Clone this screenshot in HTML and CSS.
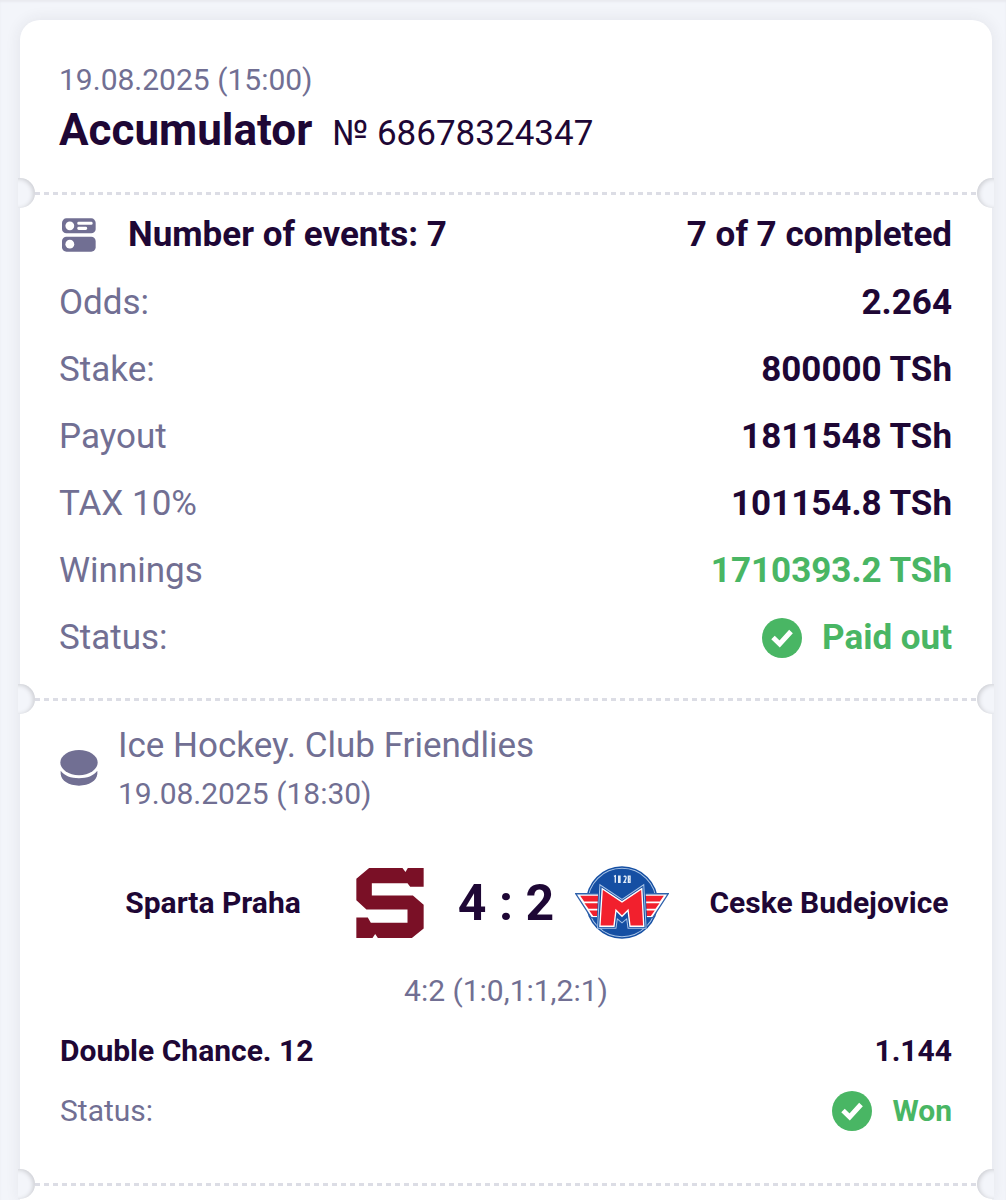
FILE: index.html
```html
<!DOCTYPE html>
<html lang="en">
<head>
<meta charset="utf-8">
<meta name="viewport" content="width=device-width, initial-scale=1">
<title>Accumulator № 68678324347</title>
<link rel="stylesheet" href="styles.css">
</head>
<body>
<main class="ticket">
  <header class="ticket-head">
    <time class="date">19.08.2025 (15:00)</time>
    <div class="title-line">
      <h1 class="title">Accumulator</h1>
      <span class="number">№ 68678324347</span>
    </div>
  </header>

  <div class="divider"></div>

  <section class="summary">
    <div class="row row-events">
      <svg class="icon-events" viewBox="0 0 100 100" aria-hidden="true">
        <rect x="0" y="1" width="99" height="44" rx="13"/>
        <rect x="0" y="55" width="99" height="44" rx="13"/>
        <g class="cut">
          <circle cx="23" cy="23" r="13"/>
          <circle cx="23" cy="77" r="13"/>
          <rect x="45" y="11" width="45" height="9" rx="4"/>
          <rect x="45" y="26" width="29" height="9" rx="4"/>
        </g>
      </svg>
      <span class="strong">Number of events: 7</span>
      <span class="value">7 of 7 completed</span>
    </div>
    <div class="row"><span>Odds:</span><span class="value">2.264</span></div>
    <div class="row"><span>Stake:</span><span class="value">800000 TSh</span></div>
    <div class="row"><span>Payout</span><span class="value">1811548 TSh</span></div>
    <div class="row"><span>TAX 10%</span><span class="value">101154.8 TSh</span></div>
    <div class="row"><span>Winnings</span><span class="value good">1710393.2 TSh</span></div>
    <div class="row">
      <span>Status:</span>
      <span class="value good status">
        <svg class="icon-check" viewBox="0 0 40 40" aria-hidden="true"><circle cx="20" cy="20" r="20"/><path d="M11 19.500l6.700 6.500L29 13.500"/></svg>
        Paid out
      </span>
    </div>
  </section>

  <div class="divider"></div>

  <section class="event">
    <header class="event-head">
      <svg class="icon-puck" viewBox="0 0 110 106" aria-hidden="true">
        <ellipse cx="55" cy="37" rx="55" ry="37"/>
        <path d="M1 61C12 76 31 83 55 83S98 76 109 61V71C107 91 85 105 55 105S3 91 1 71Z"/>
      </svg>
      <div class="event-text">
        <h2 class="league">Ice Hockey. Club Friendlies</h2>
        <time class="date">19.08.2025 (18:30)</time>
      </div>
    </header>

    <div class="match">
      <span class="team team-home">Sparta Praha</span>
      <span class="crest">
        <svg class="crest-home" viewBox="0 0 200 208" role="img" aria-label="Sparta Praha">
          <path d="M38 0H137L146 12L153 0H200V56H160L152 45H46V82H168L200 109V180L165 208H64L56 196L48 208H0V147H34L43 163H152V123H30L0 96V32Z"/>
        </svg>
      </span>
      <span class="score">4 : 2</span>
      <span class="crest">
        <svg class="crest-away" viewBox="0 0 280 218" role="img" aria-label="Ceske Budejovice">
          <circle class="blue" cx="140" cy="109" r="108"/>
          <circle class="ring" cx="140" cy="109" r="102"/>
          <path class="wing" d="M2 83H74L140 100L206 83H278L232 154H48Z"/>
          <path class="red" d="M15 89H84V106H27ZM28 111H86V128H40ZM42 133H88V149H54Z"/>
          <path class="red" d="M265 89H196V106H253ZM252 111H194V128H240ZM238 133H192V149H226Z"/>
          <path class="blue" d="M70 48L140 94L209 48L216 186H156L150 160L140 174L130 160L124 186H64Z"/>
          <path class="letter-line" d="M74 56L140 100L205 56L212 186H158L154 158L140 170L126 158L122 186H67Z"/>
          <path class="letter" d="M81 68L140 107L199 68L205 180H164L158 132L140 150L122 132L116 180H74Z"/>
          <path class="digit" d="M116 31L120 29V50M130 30H134V49H130ZM146 33Q147 29 151 31Q155 35 146 49H153M159 30H164V49H159ZM159 39H164"/>
        </svg>
      </span>
      <span class="team team-away">Ceske Budejovice</span>
    </div>
    <p class="periods">4:2 (1:0,1:1,2:1)</p>

    <div class="row row-small">
      <span class="strong">Double Chance. 12</span><span class="value">1.144</span>
    </div>
    <div class="row row-small">
      <span>Status:</span>
      <span class="value good status">
        <svg class="icon-check" viewBox="0 0 40 40" aria-hidden="true"><circle cx="20" cy="20" r="20"/><path d="M11 19.500l6.700 6.500L29 13.500"/></svg>
        Won
      </span>
    </div>
  </section>

  <div class="divider"></div>
</main>
</body>
</html>
```
FILE: styles.css
```css
:root {
  --page: #f3f5fa;
  --ink: #1e0735;
  --muted: #716f93;
  --good: #49b664;
}

* {
  box-sizing: border-box;
}

body {
  margin: 0;
  padding: 20px 14px 0 20px;
  background: var(--page);
  box-shadow: inset 0 2px 2px #e9eaf0;
  color: var(--muted);
  font-family: Roboto, "Liberation Sans", sans-serif;
  font-size: 35px;
  line-height: 40px;
}

h1,
h2,
p {
  margin: 0;
}

.ticket {
  padding-bottom: 1px;
  background: #fff;
  border-radius: 20px 20px 0 0;
  box-shadow: 0 0 16px rgba(40, 40, 60, 0.09);
}

.ticket-head {
  padding: 40px 40px 15px 39px;
}

.date {
  display: block;
  font-size: 30px;
}

.title-line {
  display: flex;
  align-items: baseline;
  gap: 20px;
  padding: 5px 0 4px;
  line-height: 50px;
  color: var(--ink);
}

.title {
  font-size: 44px;
  font-weight: 700;
  line-height: 50px;
}

/* perforated tear line with a notch at each end */
.divider {
  position: relative;
  height: 30px;
  background: repeating-linear-gradient(90deg, #dcdde5 0 5px, transparent 5px 9px) center / calc(100% - 30px) 3px no-repeat;
}

.divider::before,
.divider::after {
  content: "";
  position: absolute;
  top: 0;
  width: 19px;
  height: 30px;
  background: var(--page);
}

.divider::before {
  left: -4px;
  border-radius: 0 15px 15px 0;
  box-shadow: inset -2px 1px 4px #cfd0d5;
  clip-path: inset(0 0 0 2px);
}

.divider::after {
  right: -4px;
  border-radius: 15px 0 0 15px;
  box-shadow: inset 2px 1px 4px #cfd0d5;
  clip-path: inset(0 2px 0 0);
}

.summary {
  padding: 0 40px 13px 39px;
}

.row {
  display: flex;
  align-items: center;
  min-height: 67px;
}

.row-events {
  min-height: 61px;
  padding-bottom: 8px;
}

.row-events .strong {
  margin-left: 32px;
}

.row-small {
  min-height: 60px;
  font-size: 30px;
}

.strong,
.value {
  color: var(--ink);
  font-weight: 700;
}

.value {
  margin-left: auto;
}

.good {
  color: var(--good);
}

.status {
  display: flex;
  align-items: center;
  gap: 20px;
}

.icon-events {
  width: 34px;
  height: 34px;
  margin-left: 3px;
  fill: var(--muted);
}

.icon-events .cut {
  fill: #fff;
}

.icon-check {
  width: 40px;
  height: 40px;
  fill: var(--good);
}

.icon-check path {
  fill: none;
  stroke: #fff;
  stroke-width: 5;
}

.event {
  padding: 12px 40px 28px;
}

.event-head {
  display: flex;
  align-items: center;
  gap: 20px;
}

.event-text {
  display: grid;
  gap: 8px;
}

.league {
  font-size: 35px;
  font-weight: 400;
}

.icon-puck {
  width: 38px;
  height: 36px;
  margin-bottom: 4px;
  fill: var(--muted);
}

.match {
  display: flex;
  align-items: center;
  margin-top: 40px;
  color: var(--ink);
  font-size: 30px;
  font-weight: 700;
}

.team {
  flex: 1 1 0;
  text-align: center;
}

.team-home {
  padding-left: 30px;
  padding-right: 6px;
}

.team-away {
  padding-left: 36px;
}

.crest {
  display: flex;
  justify-content: center;
  width: 96px;
  padding: 12px 0;
}

.crest-home {
  width: 68px;
  height: 70px;
  fill: #7a1026;
}

.crest-away {
  width: 94px;
  height: 73px;
}

.crest-away .blue {
  fill: #154fa3;
}

.crest-away .ring {
  fill: none;
  stroke: #a9c4e6;
  stroke-width: 3;
}

.crest-away .wing {
  fill: #fff;
  stroke: #2f62ac;
  stroke-width: 4;
}

.crest-away .red {
  fill: #f2202d;
}

.crest-away .letter-line {
  fill: none;
  stroke: #a9c4e6;
  stroke-width: 3;
}

.crest-away .letter {
  fill: #f2202d;
  stroke: #fff;
  stroke-width: 4;
}

.crest-away .digit {
  fill: none;
  stroke: #e3edf8;
  stroke-width: 4;
}

.score {
  width: 136px;
  font-size: 50px;
  line-height: 60px;
  text-align: center;
}

.periods {
  margin-top: 20px;
  margin-bottom: 10px;
  font-size: 30px;
  text-align: center;
}
```
